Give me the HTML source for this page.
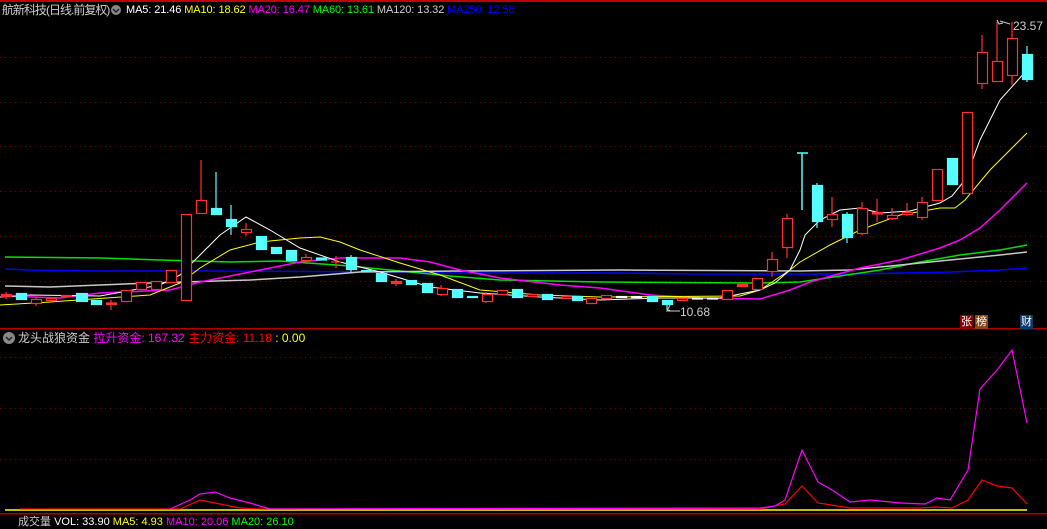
<!DOCTYPE html>
<html><head><meta charset="utf-8"><style>
html,body{margin:0;padding:0;background:#000;width:1047px;height:519px;overflow:hidden}
.t{position:absolute;font-family:"Liberation Sans","Noto Sans CJK SC",sans-serif;font-size:12px;white-space:nowrap;line-height:14px}
</style></head><body>
<svg width="1047" height="519" style="position:absolute;left:0;top:0" xmlns="http://www.w3.org/2000/svg">
<rect x="0" y="0" width="1047" height="2" fill="#c00000"/>
<g stroke="#7a0000" stroke-dasharray="1,4" stroke-width="1">
<line x1="0" y1="57.5" x2="1047" y2="57.5"/><line x1="0" y1="102.5" x2="1047" y2="102.5"/>
<line x1="0" y1="146.5" x2="1047" y2="146.5"/><line x1="0" y1="191.5" x2="1047" y2="191.5"/>
<line x1="0" y1="236.5" x2="1047" y2="236.5"/><line x1="0" y1="281.5" x2="1047" y2="281.5"/>
<line x1="0" y1="357.5" x2="1047" y2="357.5"/><line x1="0" y1="408.5" x2="1047" y2="408.5"/>
<line x1="0" y1="459.5" x2="1047" y2="459.5"/>
</g>
<rect x="0" y="328" width="1047" height="1.5" fill="#b00000"/>
<rect x="0" y="513" width="1047" height="1.5" fill="#b00000"/>
<g fill="none" stroke-width="1">
<polyline stroke="#0000ff" stroke-width="1.5" points="5,269 30,270 90,271 200,271 400,272 450,273 620,273 700,274 850,274 950,272 1000,270 1027,268"/>
<polyline stroke="#00e000" stroke-width="1.5" points="5,257 100,258 160,260 230,262 280,261 350,266 400,271 450,276 500,280 600,282 760,283 800,282 840,276 880,270 920,262 960,255 1000,250 1027,245"/>
<polyline stroke="#c8c8c8" stroke-width="1.5" points="5,286 50,287 150,283 250,280 300,277 360,272 460,271 620,270 800,271 850,270 900,265 950,260 1000,255 1027,252"/>
<polyline stroke="#ff00ff" stroke-width="1.5" points="5,296 60,298 100,293 170,290 200,282 230,276 260,270 300,262 340,258 400,258 430,262 460,270 500,278 560,285 600,288 650,295 700,298 760,299 790,290 810,282 860,268 900,260 940,248 960,240 980,228 1000,210 1027,183"/>
<polyline stroke="#ffff00" points="0,305 50,302 150,295 180,283 200,268 230,250 260,242 300,238 320,237 340,242 360,250 400,263 440,275 480,290 540,295 600,297 740,296 760,290 790,270 800,262 830,245 860,230 900,215 940,208 955,208 965,200 990,170 1027,133"/>
<polyline stroke="#ffffff" points="0,297 30,295 100,296 160,285 180,275 200,255 220,235 246,217 270,230 300,248 340,262 380,272 430,287 480,293 540,297 600,300 660,298 720,298 760,290 775,283 790,270 800,250 805,235 820,220 840,210 860,208 880,213 910,211 940,203 952,196 965,180 980,140 1000,100 1027,70"/>
</g>
<g stroke-width="1.2">
<g fill="#000" stroke="#ff3030">
<line x1="6" y1="292" x2="6" y2="299"/><rect x="1.5" y="294.5" width="10" height="2" fill="#ff3030"/>
<line x1="36" y1="297" x2="36" y2="306"/><rect x="31.5" y="299.5" width="10" height="4"/>
<rect x="46.5" y="298.5" width="10" height="2"/>
<rect x="61.5" y="295.5" width="10" height="1"/>
<line x1="111" y1="300" x2="111" y2="310"/><rect x="106.5" y="303" width="10" height="1.5" fill="#ff3030"/>
<rect x="121.5" y="290.5" width="10" height="11"/>
<rect x="136.5" y="282.5" width="10" height="7"/>
<rect x="151.5" y="281.5" width="10" height="8"/>
<rect x="166.5" y="270.5" width="10" height="12"/>
<rect x="181.5" y="214.5" width="10" height="86"/>
<line x1="201" y1="160" x2="201" y2="214"/><rect x="196.5" y="200.5" width="10" height="13"/>
<line x1="246" y1="223" x2="246" y2="236"/><rect x="241.5" y="229.5" width="10" height="3"/>
<line x1="306" y1="254" x2="306" y2="264"/><rect x="301.5" y="257.5" width="10" height="3"/>
<line x1="336" y1="256" x2="336" y2="268"/><line x1="331" y1="262" x2="341" y2="262"/>
<line x1="396" y1="279" x2="396" y2="286"/><rect x="391.5" y="281.5" width="10" height="2" fill="#ff3030"/>
<line x1="441" y1="285" x2="441" y2="296"/><rect x="437.5" y="288.5" width="10" height="6"/>
<line x1="486" y1="292" x2="486" y2="303"/><rect x="482.5" y="294.5" width="10" height="7"/>
<rect x="497.5" y="290.5" width="10" height="4"/>
<rect x="527.5" y="294.5" width="10" height="2"/>
<rect x="562.5" y="296.5" width="10" height="2"/>
<rect x="586.5" y="298.5" width="10" height="5"/>
<rect x="601.5" y="295.5" width="10" height="3"/>
<rect x="677.5" y="298.5" width="10" height="2"/>
<rect x="722.5" y="290.5" width="10" height="9"/>
<rect x="737.5" y="284.5" width="10" height="2" fill="#ff3030"/>
<rect x="752.5" y="278.5" width="10" height="11"/>
<line x1="772" y1="252" x2="772" y2="277"/><rect x="767.5" y="259.5" width="10" height="12"/>
<line x1="787" y1="214" x2="787" y2="258"/><rect x="782.5" y="218.5" width="10" height="29"/>
<line x1="832" y1="197" x2="832" y2="227"/><rect x="827.5" y="214.5" width="10" height="5"/>
<line x1="862" y1="202" x2="862" y2="235"/><rect x="857.5" y="208.5" width="10" height="25"/>
<line x1="877" y1="199" x2="877" y2="222"/><rect x="872.5" y="212.5" width="10" height="1.5" fill="#ff3030"/>
<line x1="892" y1="208" x2="892" y2="220"/><rect x="887.5" y="215.5" width="10" height="3"/>
<line x1="907" y1="203" x2="907" y2="216"/><rect x="902.5" y="212.5" width="10" height="2"/>
<line x1="922" y1="197" x2="922" y2="220"/><rect x="917.5" y="202.5" width="10" height="15"/>
<rect x="932.5" y="169.5" width="10" height="31"/>
<rect x="962.5" y="112.5" width="10" height="81"/>
<line x1="982" y1="35" x2="982" y2="89"/><rect x="977.5" y="52.5" width="10" height="31"/>
<line x1="997" y1="22" x2="997" y2="82"/><rect x="992.5" y="61.5" width="10" height="20"/>
<line x1="1012" y1="22" x2="1012" y2="85"/><rect x="1007.5" y="38.5" width="10" height="37"/>
</g>
<g fill="#55ffff" stroke="#55ffff">
<rect x="16.5" y="293.5" width="10" height="6"/>
<rect x="76.5" y="293.5" width="11" height="8"/>
<rect x="91.5" y="300.5" width="10" height="4"/>
<line x1="216" y1="172" x2="216" y2="215"/><rect x="211.5" y="208.5" width="10" height="6"/>
<line x1="231" y1="205" x2="231" y2="235"/><rect x="226.5" y="219.5" width="10" height="7"/>
<rect x="256.5" y="236.5" width="10" height="13"/>
<rect x="271.5" y="247.5" width="10" height="6"/>
<rect x="286.5" y="250.5" width="10" height="10"/>
<rect x="316.5" y="258" width="10" height="2"/>
<line x1="351" y1="255" x2="351" y2="272"/><rect x="346.5" y="257.5" width="10" height="12"/>
<rect x="361.5" y="270.5" width="10" height="1"/>
<rect x="376.5" y="273.5" width="10" height="8"/>
<rect x="406.5" y="280.5" width="10" height="4"/>
<rect x="422.5" y="283.5" width="10" height="9"/>
<rect x="452.5" y="289.5" width="10" height="8"/>
<rect x="467.5" y="296.5" width="10" height="1"/>
<rect x="512.5" y="289.5" width="10" height="8"/>
<rect x="542.5" y="294.5" width="10" height="5"/>
<rect x="572.5" y="296.5" width="10" height="4"/>
<rect x="647.5" y="296.5" width="10" height="5"/>
<line x1="667" y1="300" x2="667" y2="310"/><rect x="662.5" y="300.5" width="10" height="4"/>
<line x1="802" y1="153" x2="802" y2="210" stroke-width="1.5"/><line x1="797" y1="153" x2="808" y2="153" stroke-width="1.5"/>
<line x1="817" y1="183" x2="817" y2="228"/><rect x="812.5" y="185.5" width="10" height="36"/>
<line x1="847" y1="212" x2="847" y2="243"/><rect x="842.5" y="214.5" width="10" height="23"/>
<rect x="947.5" y="158.5" width="10" height="26"/>
<line x1="1027" y1="46" x2="1027" y2="82"/><rect x="1022.5" y="54.5" width="10" height="25"/>
</g>
<g fill="#fff" stroke="#fff">
<rect x="616.5" y="296.5" width="10" height="1"/><rect x="631.5" y="296.5" width="10" height="1"/>
<rect x="692.5" y="298" width="10" height="1"/><rect x="707.5" y="298" width="10" height="1"/>
</g>
</g>
<g stroke="#ccc" fill="none"><polyline points="670,305 667,311 670,310"/><line x1="668" y1="311" x2="680" y2="311"/>
<polyline points="997,20 999,24 1003,23"/><line x1="1000" y1="21" x2="1010" y2="24"/></g>
<g fill="none" stroke-width="1.2">
<polyline stroke="#ffff00" stroke-width="1.5" points="5,510 1027,510"/>
<polyline stroke="#ff0000" points="20,509 180,509 200,500 215,503 240,508 260,509 760,509 785,504 802,486 818,503 850,508 920,508 937,507 952,508 968,500 982,480 997,486 1012,488 1027,504"/>
<polyline stroke="#ff00ff" points="170,509 190,500 200,494 215,492 230,498 250,503 270,509 760,508 775,506 785,500 802,450 818,482 832,490 850,502 870,500 900,503 925,504 937,498 950,500 968,470 980,389 997,370 1012,350 1027,423"/>
</g>
<circle cx="9" cy="338" r="6" fill="#888"/><polyline points="6,337 9,340 12,337" stroke="#222" fill="none" stroke-width="1.5"/>
<circle cx="116" cy="10" r="5" fill="#888"/><polyline points="113,9 116,12 119,9" stroke="#222" fill="none" stroke-width="1.5"/>
<rect x="960" y="315" width="13" height="14" fill="#8b0000"/><rect x="975" y="315" width="13" height="14" fill="#8b4513"/><rect x="1020" y="315" width="13" height="14" fill="#0f3a6e"/>
</svg>
<div class="t" style="left:2px;top:3px;color:#ccc;letter-spacing:-1px">航新科技(日线.前复权)</div>
<div class="t" style="left:126px;top:3px;font-size:11px;letter-spacing:-0.1px"><span style="color:#fff">MA5: 21.46 </span><span style="color:#ff0"> MA10: 18.62 </span><span style="color:#f0f"> MA20: 16.47 </span><span style="color:#0f0"> MA60: 13.61 </span><span style="color:#ccc"> MA120: 13.32 </span><span style="color:#00f"> MA250: 12.58</span></div>
<div class="t" style="left:1013px;top:19px;color:#ccc">23.57</div>
<div class="t" style="left:680px;top:305px;color:#ccc">10.68</div>
<div class="t" style="left:961px;top:315px;color:#fff;font-size:11px">张</div>
<div class="t" style="left:976px;top:315px;color:#fff;font-size:11px">榜</div>
<div class="t" style="left:1021px;top:315px;color:#fff;font-size:11px">财</div>
<div class="t" style="left:18px;top:331px;color:#ccc">龙头战狼资金 <span style="color:#f0f">拉升资金: 167.32</span> <span style="color:#f00">主力资金: 11.18</span> <span style="color:#ff0">: 0.00</span></div>
<div class="t" style="left:18px;top:515px;color:#ccc;font-size:11px">成交量 <span style="color:#fff">VOL: 33.90</span> <span style="color:#ff0">MA5: 4.93</span> <span style="color:#f0f">MA10: 20.06</span> <span style="color:#0f0">MA20: 26.10</span></div>
</body></html>
